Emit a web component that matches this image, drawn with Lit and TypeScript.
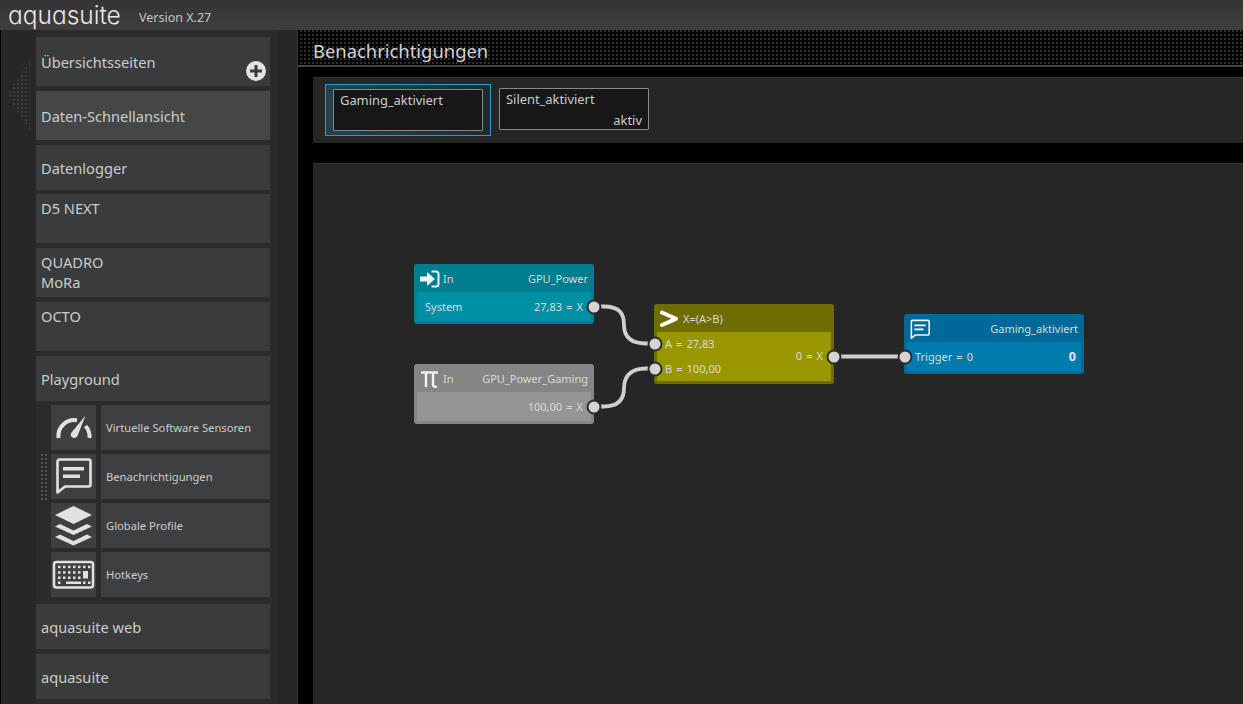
import { LitElement, html, css, svg } from 'lit';
import { customElement } from 'lit/decorators.js';
import { classMap } from 'lit/directives/class-map.js';

const ICON = '#dfe1e3';

const gaugeIcon = html`<svg viewBox="0 0 45 45" width="45" height="45">
  <path d="M7.500 33A16 16 0 0 1 26 15.200" fill="none" stroke="${ICON}" stroke-width="4"/>
  <path d="M34.500 10.500L26.700 30.500c-0.800 2-2.800 3-4.800 2.200-2-0.800-2.800-2.900-1.800-4.700z" fill="${ICON}"/>
  <path d="M34.500 21A16 16 0 0 1 38.500 33" fill="none" stroke="${ICON}" stroke-width="4"/>
</svg>`;

const commentPath = (c: string, sw: number) => svg`
  <path d="M8 5.500H37.500a2 2 0 0 1 2 2V30.500a2 2 0 0 1-2 2H14L6.500 38.500V7.500a2 2 0 0 1 1.500-2z" fill="none" stroke="${c}" stroke-width="${sw}" stroke-linejoin="round"/>
  <rect x="12" y="13" width="21" height="3.500" fill="${c}"/>
  <rect x="12" y="20.500" width="17" height="3.500" fill="${c}"/>`;

const layersIcon = html`<svg viewBox="0 0 45 45" width="45" height="45">
  <path d="M22.500 3L41 12 22.500 21 4 12z" fill="${ICON}"/>
  <path d="M4 23.500L9 21 22.500 27.500 36 21 41 23.500 22.500 32z" fill="${ICON}"/>
  <path d="M4 34L9 31.500 22.500 38 36 31.500 41 34 22.500 42.500z" fill="${ICON}"/>
</svg>`;

const keyRow = (y: number, xs: number[]) => xs.map((x) => svg`<rect x="${x}" y="${y}" width="2.500" height="2.500" fill="${ICON}"/>`);

const keyboardIcon = html`<svg viewBox="0 0 45 45" width="45" height="45">
  <rect x="3" y="10" width="39" height="25.500" rx="2.500" fill="none" stroke="${ICON}" stroke-width="2.500"/>
  ${keyRow(13.700, [7, 12, 17, 22, 27, 32, 37])}
  ${keyRow(19.200, [7, 12, 17, 22, 27])}
  ${keyRow(24.500, [7, 12, 17, 22, 27])}
  ${keyRow(29.500, [7, 32, 37])}
  <rect x="32" y="19" width="5" height="7.500" fill="${ICON}"/>
  <rect x="15" y="29.500" width="15" height="2.500" fill="${ICON}"/>
</svg>`;

const nodeIcons: Record<string, unknown> = {
  input: html`<svg viewBox="0.500 0 20 18" width="20" height="18">
    <path d="M0.500 6.500h7V2l8 7-8 7v-4.500h-7z" fill="#f2f2f2"/>
    <path d="M12 1.500h4.500a2.500 2.500 0 0 1 2.500 2.500v10a2.500 2.500 0 0 1-2.500 2.500H12" fill="none" stroke="#f2f2f2" stroke-width="2"/>
  </svg>`,
  pi: html`<svg viewBox="0 0 20 20" width="20" height="20">
    <path d="M1 3.500h17" stroke="#f2f2f2" stroke-width="2.400" fill="none"/>
    <path d="M6 3.500V18" stroke="#f2f2f2" stroke-width="2.400" fill="none"/>
    <path d="M13 3.500v12c0 2 1.200 2.800 3.800 1.800" stroke="#f2f2f2" stroke-width="2.400" fill="none"/>
  </svg>`,
  gt: html`<svg viewBox="0 0 20 18" width="20" height="18">
    <path d="M2 2.500L16 8.800 2 15" stroke="#ffffff" stroke-width="4" fill="none" stroke-linecap="round" stroke-linejoin="round"/>
  </svg>`,
  note: html`<svg viewBox="4 3 37 37" width="20" height="20">${commentPath('#f2f2f2', 3)}</svg>`,
};

interface Row { left?: string; right?: string; strong?: boolean }
interface FlowNode {
  x: number; y: number; h: number; tone: string; icon: string;
  kind?: string; name: string; rows: Row[];
}

const nodes: FlowNode[] = [
  { x: 414, y: 264, h: 60, tone: 'teal', icon: 'input', kind: 'In', name: 'GPU_Power', rows: [{ left: 'System', right: '27,83 = X' }] },
  { x: 414, y: 364, h: 60, tone: 'grey', icon: 'pi', kind: 'In', name: 'GPU_Power_Gaming', rows: [{ right: '100,00 = X' }] },
  { x: 654, y: 304, h: 80, tone: 'olive', icon: 'gt', kind: 'X=(A>B)', name: '', rows: [{ left: 'A = 27,83' }, { right: '0 = X' }, { left: 'B = 100,00' }] },
  { x: 904, y: 314, h: 60, tone: 'blue', icon: 'note', name: 'Gaming_aktiviert', rows: [{ left: 'Trigger = 0', right: '0', strong: true }] },
];

const ports = [[593.5, 306.5], [654.5, 343.5], [654.5, 368.5], [593.5, 406.5], [833.5, 356.5], [904.5, 356.5]];

const wires = [
  'M593 306.500H604C620 306.500 624 314 624 325C624 336 630 343.500 646 343.500H655',
  'M593 406.500H604C620 406.500 624 398 624 388C624 377 630 368.500 646 368.500H655',
  'M833 356.500H904',
];

const subItems = [
  { icon: gaugeIcon, label: 'Virtuelle Software Sensoren' },
  { icon: html`<svg viewBox="0 0 45 45" width="45" height="45">${commentPath(ICON, 2.600)}</svg>`, label: 'Benachrichtigungen', active: true },
  { icon: layersIcon, label: 'Globale Profile' },
  { icon: keyboardIcon, label: 'Hotkeys' },
];

@customElement('app-root')
export class AppRoot extends LitElement {
  static styles = css`
    :host {
      display: block;
      width: 100vw;
      height: 100vh;
      overflow: hidden;
      background: #000;
      color: #cbcdcd;
      font-family: "Noto Sans", "Open Sans", sans-serif;
    }

    .titlebar {
      height: 30px;
      display: flex;
      align-items: center;
      background: linear-gradient(#343434, #3e3e3e);
      padding-left: 8px;
    }
    .logo {
      font-family: Inter, "Noto Sans", sans-serif;
      font-feature-settings: "cv11";
      font-weight: 300;
      font-size: 24.500px;
      line-height: 30px;
      width: 131px;
      flex: none;
      color: #e8e8e8;
    }
    .version { font-size: 12.500px; color: #c4c6c6; position: relative; top: 2px; }

    .body { display: flex; height: 674px; }

    .sidebar {
      position: relative;
      width: 296px;
      flex: none;
      margin-left: 1px;
      border-right: 1px solid #333;
      box-sizing: content-box;
      padding-top: 7px;
      background: linear-gradient(90deg, #272727 0, #272727 35px, #2b2b2b 35px, #2b2b2b 276px, #262626 276px);
      display: flex;
      flex-direction: column;
      gap: 4px;
    }
    .sidebar > * { margin-left: 35px; }

    .spaced { margin-top: 1px; }
    .gap-lg { margin-top: 3px; }
    .item {
      width: 234px;
      height: 45px;
      background: #3a3c3c;
      font-size: 14.600px;
      line-height: 20px;
      padding: 0 5px;
      box-sizing: border-box;
      display: flex;
      align-items: center;
      flex: none;
      position: relative;
    }
    .tall { height: 49px; }
    .top { align-items: flex-start; padding-top: 4px; }
    .sel { background: #454747; }
    .plus { position: absolute; right: 4px; bottom: 5px; width: 20px; height: 20px; }

    .sub { display: flex; gap: 5px; margin-left: 50px; position: relative; flex: none; }
    .sub-icon {
      width: 45px;
      height: 45px;
      background: #3e3f41;
      flex: none;
    }
    .sub-icon svg { display: block; }
    .sub-label {
      width: 169px;
      height: 45px;
      background: #3e3f41;
      display: flex;
      align-items: center;
      padding-left: 5px;
      box-sizing: border-box;
      font-size: 11.200px;
    }
    .dots-v {
      position: absolute;
      left: -12px;
      top: 0;
      width: 8px;
      height: 46px;
      background-image: conic-gradient(#555 25%, transparent 0);
      background-size: 4px 4px;
    }
    .sidebar > .dots-d {
      position: absolute;
      margin: 0;
      left: 6px;
      top: 29px;
      width: 23px;
      height: 72px;
      background-image: conic-gradient(#3d3d3d 25%, transparent 0);
      background-size: 4px 4px;
      clip-path: polygon(100% 0, 100% 100%, 0 50%);
    }

    .main { flex: 1; min-width: 0; display: flex; flex-direction: column; }
    .heading {
      height: 35px;
      flex: none;
      border-bottom: 2px solid #444;
      background-color: #000;
      background-image: conic-gradient(#303030 25%, transparent 0);
      background-size: 4px 4px;
      padding-left: 15px;
      font-size: 18.400px;
      line-height: 42px;
      color: #d0d2d2;
    }
    .tabs {
      margin: 10px 0 20px 15px;
      height: 66px;
      background: #262626;
      box-sizing: border-box;
      border-top: 1px solid #333;
      padding: 6px 0 0 12px;
      display: flex;
      gap: 8px;
      flex: none;
    }
    .tab { padding-top: 4px; }
    .tab.on {
      width: 166px;
      height: 52px;
      box-sizing: border-box;
      border: 1px solid #2a9bcf;
      padding: 4px 7px;
      background: linear-gradient(90deg, #26414e, #1e2a30);
    }
    .card {
      width: 150px;
      height: 42px;
      box-sizing: border-box;
      border: 1px solid #888;
      border-radius: 1px;
      background: #171717;
      padding: 0 6px;
      font-size: 12.900px;
      line-height: 20px;
      display: flex;
      flex-direction: column;
      justify-content: space-between;
    }
    .card .state { text-align: right; margin-bottom: -1px; }

    .canvas {
      position: relative;
      margin-left: 15px;
      flex: 1;
      background: #262626;
      border-top: 1px solid #333;
      box-sizing: border-box;
    }
    .wires {
      position: absolute;
      left: -313px;
      top: -164px;
      width: 1243px;
      height: 704px;
      pointer-events: none;
      z-index: 2;
    }

    .node {
      position: absolute;
      width: 180px;
      box-sizing: border-box;
      border-radius: 3px;
      padding: 0 3px 3px;
      display: flex;
      flex-direction: column;
      font-size: 11px;
      color: #d8dada;
      word-spacing: 1.200px;
    }
    .node.teal { background: #007d8f; --body: #0090a6; }
    .node.grey { background: #858585; --body: #959595; }
    .node.olive { background: #6f6c00; --body: #999700; }
    .node.blue { background: #00699a; --body: #007bae; }
    .head {
      height: 28px;
      flex: none;
      box-sizing: border-box;
      display: flex;
      align-items: center;
      padding: 1px 3px 0;
      gap: 3px;
    }
    .head svg { display: block; flex: none; }
    .head .name { margin-left: auto; }
    .rows {
      flex: 1;
      background: var(--body);
      display: flex;
      flex-direction: column;
      justify-content: center;
      padding: 0 8px;
    }
    .row {
      display: flex;
      justify-content: space-between;
      align-items: center;
      line-height: 25px;
    }
    .olive .row { line-height: 12.500px; height: 12.500px; }
    .row .strong { font-weight: 700; font-size: 12.500px; color: #e6e8e8; margin-right: -3px; }
    .row .spacer { flex: 1; }

    .port {
      position: absolute;
      width: 15px;
      height: 15px;
      box-sizing: border-box;
      border-radius: 50%;
      background: #d4d4d4;
      border: 2px solid #2e2a2a;
      transform: translate(-50%, -50%);
      z-index: 3;
    }
  `;

  private renderNode(n: FlowNode) {
    return html`
      <div class="node ${n.tone}" style="left:${n.x - 313}px;top:${n.y - 164}px;height:${n.h}px">
        <div class="head">
          ${nodeIcons[n.icon]}
          ${n.kind ? html`<span>${n.kind}</span>` : ''}
          <span class="name">${n.name}</span>
        </div>
        <div class="rows">
          ${n.rows.map((r) => html`
            <div class="row">
              ${r.left ? html`<span>${r.left}</span>` : html`<span class="spacer"></span>`}
              ${r.right ? html`<span class=${classMap({ strong: !!r.strong })}>${r.right}</span>` : ''}
            </div>`)}
        </div>
      </div>
    `;
  }

  render() {
    return html`
      <div class="titlebar">
        <span class="logo">aquasuite</span>
        <span class="version">Version X.27</span>
      </div>
      <div class="body">
        <nav class="sidebar">
          <div class="dots-d"></div>
          <div class="item tall">Übersichtsseiten
            <svg class="plus" viewBox="0 0 20 20">
              <circle cx="10" cy="10" r="10" fill="#e4e4e4"/>
              <path d="M10 4v12M4 10h12" stroke="#3a3c3c" stroke-width="3"/>
            </svg>
          </div>
          <div class="item tall sel spaced">Daten-Schnellansicht</div>
          <div class="item spaced">Datenlogger</div>
          <div class="item tall top">D5 NEXT</div>
          <div class="item tall top spaced">QUADRO<br />MoRa</div>
          <div class="item tall top spaced">OCTO</div>
          <div class="item spaced">Playground</div>
          ${subItems.map((s) => html`
            <div class="sub">
              ${s.active ? html`<div class="dots-v"></div>` : ''}
              <div class="sub-icon">${s.icon}</div>
              <div class="sub-label">${s.label}</div>
            </div>`)}
          <div class="item gap-lg">aquasuite web</div>
          <div class="item spaced">aquasuite</div>
        </nav>
        <main class="main">
          <div class="heading">Benachrichtigungen</div>
          <div class="tabs">
            <div class="tab on"><div class="card"><span>Gaming_aktiviert</span></div></div>
            <div class="tab"><div class="card"><span>Silent_aktiviert</span><span class="state">aktiv</span></div></div>
          </div>
          <div class="canvas">
            <svg class="wires" viewBox="0 0 1243 704">
              ${wires.map((d) => svg`<path d=${d} fill="none" stroke="#cfcfcf" stroke-width="3.800"/>`)}
            </svg>
            ${nodes.map((n) => this.renderNode(n))}
            ${ports.map(([x, y]) => html`<div class="port" style="left:${x - 313}px;top:${y - 164}px"></div>`)}
          </div>
        </main>
      </div>
    `;
  }
}
